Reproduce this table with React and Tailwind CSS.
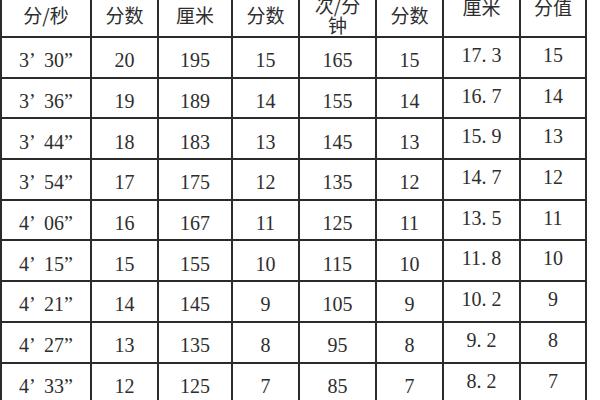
import React from "react";

const rows = [
  ["3’", "30”", "20", "195", "15", "165", "15", "17.3", "15"],
  ["3’", "36”", "19", "189", "14", "155", "14", "16.7", "14"],
  ["3’", "44”", "18", "183", "13", "145", "13", "15.9", "13"],
  ["3’", "54”", "17", "175", "12", "135", "12", "14.7", "12"],
  ["4’", "06”", "16", "167", "11", "125", "11", "13.5", "11"],
  ["4’", "15”", "15", "155", "10", "115", "10", "11.8", "10"],
  ["4’", "21”", "14", "145", "9", "105", "9", "10.2", "9"],
  ["4’", "27”", "13", "135", "8", "95", "8", "9.2", "8"],
  ["4’", "33”", "12", "125", "7", "85", "7", "8.2", "7"],
];

const widths = [90, 67, 74, 67, 77, 67, 77, 66];

// SimSun style decimal: the dot takes a full digit cell
const Decimal = ({ value }) => {
  const [a, b] = value.split(".");
  return (
    <>
      {a}
      <span className="inline-block w-[10px] text-left">.</span>
      {b}
    </>
  );
};

const head = "border-2 border-[#2b2b2b] text-center align-middle p-0 font-normal";
const headTop = "border-2 border-[#2b2b2b] text-center align-top p-0 pt-[2px] font-normal";
const cell = "border-2 border-[#2b2b2b] text-center align-middle p-0 pt-[6px]";
const topCell = "border-2 border-[#2b2b2b] text-center align-top p-0 pt-[5px]";

export default function App() {
  return (
    <div
      className="w-[600px] h-[400px] overflow-hidden bg-white text-[#2e2e2e] text-[20px] leading-6"
      style={{ fontFamily: '"Liberation Serif", "Noto Sans CJK SC", serif' }}
    >
      <table className="table-fixed border-collapse -mt-[9px] w-[587px]">
        <colgroup>
          {widths.map((w, i) => (
            <col key={i} style={{ width: w }} />
          ))}
        </colgroup>
        <thead>
          <tr className="h-[45px] text-[19px]" style={{ fontFamily: '"Noto Sans CJK SC", sans-serif' }}>
            <th className={head}>分/秒</th>
            <th className={head}>分数</th>
            <th className={head}>厘米</th>
            <th className={head}>分数</th>
            <th className={`${head} leading-[20px]`}>
              次/分
              <br />
              钟
            </th>
            <th className={head}>分数</th>
            <th className={headTop}>厘米</th>
            <th className={headTop}>分值</th>
          </tr>
        </thead>
        <tbody>
          {rows.map((r) => (
            <tr key={r[0] + r[1]} className="h-[40.7px]">
              <td className={cell}>
                <span className="inline-block w-[25px] text-left">{r[0]}</span>
                {r[1]}
              </td>
              <td className={cell}>{r[2]}</td>
              <td className={cell}>{r[3]}</td>
              <td className={cell}>{r[4]}</td>
              <td className={cell}>{r[5]}</td>
              <td className={cell}>{r[6]}</td>
              <td className={topCell}>
                <Decimal value={r[7]} />
              </td>
              <td className={topCell}>{r[8]}</td>
            </tr>
          ))}
        </tbody>
      </table>
    </div>
  );
}
